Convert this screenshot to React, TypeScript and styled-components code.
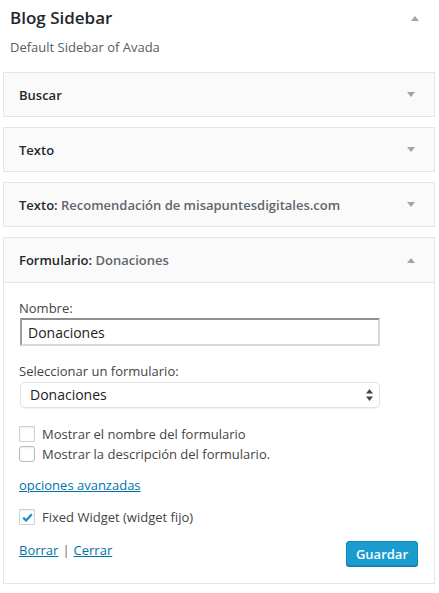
import styled, { createGlobalStyle } from 'styled-components';

const GlobalStyle = createGlobalStyle`
  body {
    margin: 0;
    background: #ffffff;
    font-family: 'Open Sans', 'Liberation Sans', sans-serif;
    color: #444444;
  }
`;

interface WidgetItem {
  name: string;
  title?: string;
}

const closedWidgets: WidgetItem[] = [
  { name: 'Buscar' },
  { name: 'Texto' },
  { name: 'Texto', title: 'Recomendación de misapuntesdigitales.com' },
];

const Arrow = ({ up }: { up?: boolean }) => (
  <ArrowIcon width="8" height="5" viewBox="0 0 8 5">
    {up ? <path d="M4 0L8 5H0z" /> : <path d="M0 0h8L4 5z" />}
  </ArrowIcon>
);

const App = () => {
  return (
    <>
      <GlobalStyle />
      <Sidebar>
        <SidebarHead>
          <SidebarTitle>Blog Sidebar</SidebarTitle>
          <Arrow up />
        </SidebarHead>
        <Description>Default Sidebar of Avada</Description>

        <WidgetList>
          {closedWidgets.map((w, i) => (
            <Widget key={i}>
              <WidgetTop>
                <WidgetName>
                  {w.name}
                  {w.title && (
                    <>
                      : <span>{w.title}</span>
                    </>
                  )}
                </WidgetName>
                <Arrow />
              </WidgetTop>
            </Widget>
          ))}

          <Widget>
            <WidgetTop $open>
              <WidgetName>
                Formulario: <span>Donaciones</span>
              </WidgetName>
              <Arrow up />
            </WidgetTop>
            <WidgetInside>
              <Field>
                <Label>Nombre:</Label>
                <TextInput defaultValue="Donaciones" />
              </Field>
              <Field $gap={15}>
                <Label>Seleccionar un formulario:</Label>
                <SelectBox>
                  <span>Donaciones</span>
                  <svg width="7" height="12" viewBox="0 0 7 12">
                    <path d="M3.5 0L7 4.5H0z" fill="#444" />
                    <path d="M0 7.5h7L3.5 12z" fill="#444" />
                  </svg>
                </SelectBox>
              </Field>

              <Checks>
                <CheckRow>
                  <CheckBox />
                  Mostrar el nombre del formulario
                </CheckRow>
                <CheckRow>
                  <CheckBox $focus />
                  Mostrar la descripción del formulario.
                </CheckRow>
              </Checks>

              <Link href="#">opciones avanzadas</Link>

              <CheckRow $top={12}>
                <CheckBox>
                  <svg width="11" height="9" viewBox="0 0 11 9">
                    <path d="M1.2 4.6l2.9 2.9L9.8 1.3" fill="none" stroke="#1e8cbe" strokeWidth="2.2" />
                  </svg>
                </CheckBox>
                Fixed Widget (widget fijo)
              </CheckRow>

              <Actions>
                <Links>
                  <Link href="#">Borrar</Link>
                  <Sep>|</Sep>
                  <Link href="#">Cerrar</Link>
                </Links>
                <SaveButton>Guardar</SaveButton>
              </Actions>
            </WidgetInside>
          </Widget>
        </WidgetList>
      </Sidebar>
    </>
  );
};

export default App;

const Sidebar = styled.div`
  width: 432px;
  padding: 0 4px 0 3px;
`;

const SidebarHead = styled.div`
  display: flex;
  align-items: center;
  justify-content: space-between;
  height: 26px;
  padding: 5px 16px 0 7px;
`;

const SidebarTitle = styled.h2`
  margin: 0;
  font-size: 17px;
  line-height: 26px;
  font-weight: 600;
  color: #23282d;
`;

const ArrowIcon = styled.svg`
  fill: #a0a5aa;
  flex-shrink: 0;
`;

const Description = styled.p`
  margin: 6px 0 0 7px;
  font-size: 13px;
  line-height: 20px;
  color: #555d66;
`;

const WidgetList = styled.div`
  margin-top: 15px;
  display: flex;
  flex-direction: column;
  gap: 10px;
`;

const Widget = styled.div`
  border: 1px solid #e5e5e5;
  background: #ffffff;
`;

const WidgetTop = styled.div<{ $open?: boolean }>`
  display: flex;
  align-items: center;
  justify-content: space-between;
  height: ${({ $open }) => ($open ? 44 : 43)}px;
  padding: 0 19px 0 15px;
  background: #fafafa;
  border-bottom: ${({ $open }) => ($open ? '1px solid #e5e5e5' : 'none')};
`;

const WidgetName = styled.div`
  font-size: 13px;
  font-weight: 600;
  color: #23282d;

  span {
    color: #5f666d;
  }
`;

const WidgetInside = styled.div`
  padding: 15px 15px 17px 15px;
  display: flex;
  flex-direction: column;
  align-items: flex-start;
  font-size: 13px;
  line-height: 20px;
`;

const Field = styled.div<{ $gap?: number }>`
  margin-top: ${({ $gap }) => $gap ?? 0}px;
  display: flex;
  flex-direction: column;
`;

const Label = styled.label`
  color: #444444;
`;

const TextInput = styled.input`
  box-sizing: border-box;
  width: 360px;
  height: 28px;
  margin-left: 1px;
  padding: 0 6px;
  border: 2px solid #dadada;
  border-top-color: #8e8e8e;
  border-left-color: #9e9e9e;
  font-family: inherit;
  font-size: 14px;
  color: #222;
  outline: none;
`;

const SelectBox = styled.div`
  box-sizing: border-box;
  width: 360px;
  height: 26px;
  margin: 1px 0 0 1px;
  padding: 0 6px 0 9px;
  display: flex;
  align-items: center;
  justify-content: space-between;
  border: 1px solid #e2e2e2;
  border-radius: 5px;
  box-shadow: 0 1px 1px rgba(0, 0, 0, 0.06);
  font-size: 14px;
  color: #222;
`;

const Checks = styled.div`
  margin-top: 16px;
`;

const CheckRow = styled.label<{ $top?: number }>`
  display: flex;
  align-items: center;
  gap: 7px;
  height: 20px;
  margin-top: ${({ $top }) => $top ?? 0}px;
  color: #444444;
`;

const CheckBox = styled.span<{ $focus?: boolean }>`
  box-sizing: border-box;
  width: 16px;
  height: 16px;
  display: flex;
  align-items: center;
  justify-content: center;
  border: 1px solid ${({ $focus }) => ($focus ? '#b3bdc6' : '#cdd1d5')};
  border-radius: ${({ $focus }) => ($focus ? 3 : 1)}px;
  box-shadow: inset 0 1px 2px rgba(0, 0, 0, 0.08);
  background: #fff;
`;

const Link = styled.a`
  margin-top: 11px;
  color: #0073aa;
  text-decoration: underline;
`;

const Actions = styled.div`
  margin-top: 13px;
  align-self: stretch;
  display: flex;
  justify-content: space-between;
  align-items: flex-start;
  padding-right: 1px;

  ${Link} {
    margin-top: 0;
  }
`;

const Links = styled.div`
  display: flex;
  gap: 4px;
`;

const Sep = styled.span`
  color: #666;
`;

const SaveButton = styled.button`
  margin-top: 1px;
  height: 25px;
  padding: 0 9px;
  border: 1px solid #1489ba;
  border-radius: 3px;
  background: #1b9ccf;
  box-shadow: 0 1px 0 #127fab;
  color: #fff;
  font-family: inherit;
  font-size: 13px;
  font-weight: 600;
`;
